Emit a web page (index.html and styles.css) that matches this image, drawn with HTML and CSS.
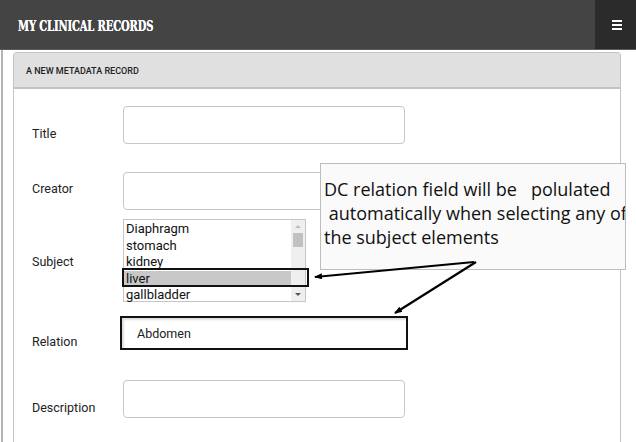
FILE: index.html
```html
<!DOCTYPE html>
<html>
<head>
<meta charset="utf-8">
<link rel="stylesheet" href="styles.css">
</head>
<body>
<header class="navbar">
  <div class="brand">MY CLINICAL RECORDS</div>
  <div class="toggle"><span></span><span></span><span></span></div>
</header>
<main class="page">
  <section class="panel">
    <div class="panel-heading">A NEW METADATA RECORD</div>
    <div class="panel-body">
      <div class="row row-title">
        <label class="lbl">Title</label>
        <div class="input"></div>
      </div>
      <div class="row row-creator">
        <label class="lbl">Creator</label>
        <div class="input"></div>
      </div>
      <div class="row row-subject">
        <label class="lbl">Subject</label>
        <div class="listbox">
          <div class="options">
            <div class="opt">Diaphragm</div>
            <div class="opt">stomach</div>
            <div class="opt">kidney</div>
            <div class="opt selected">liver</div>
            <div class="opt">gallbladder</div>
          </div>
          <div class="scrollbar">
            <div class="arrow up"></div>
            <div class="track"><div class="thumb"></div></div>
            <div class="arrow down"></div>
          </div>
          <div class="highlight"></div>
        </div>
      </div>
      <div class="row row-relation">
        <label class="lbl">Relation</label>
        <div class="input relation">Abdomen</div>
      </div>
      <div class="row row-desc">
        <label class="lbl">Description</label>
        <div class="input"></div>
      </div>
    </div>
  </section>
  <div class="callout">DC relation field will be &nbsp; polulated<br>&nbsp;automatically when selecting any of<br>the subject elements</div>
  <svg class="arrows" width="636" height="442" viewBox="0 0 636 442">
    <defs>
      <marker id="ah" markerWidth="8" markerHeight="6" refX="7" refY="3" orient="auto" markerUnits="userSpaceOnUse">
        <path d="M0,0 L8,3 L0,6 Z" fill="#000"/>
      </marker>
    </defs>
    <line x1="472" y1="262" x2="313" y2="277" stroke="#000" stroke-width="2.2" marker-end="url(#ah)"/>
    <line x1="474" y1="262" x2="393" y2="313" stroke="#000" stroke-width="2.2" marker-end="url(#ah)"/>
  </svg>
</main>
</body>
</html>
```
FILE: styles.css
```css
* { box-sizing: border-box; }
html, body { margin: 0; padding: 0; background: #fff; }
body { width: 636px; height: 442px; overflow: hidden; font-family: Roboto, "Liberation Sans", sans-serif; position: relative; }

.navbar {
  height: 50px;
  background: #444;
  border-bottom: 1px solid #5a5a5a;
  display: flex;
  justify-content: space-between;
  align-items: stretch;
  padding-left: 18px;
}
.brand {
  color: #fff;
  font-family: "DejaVu Serif Condensed", "DejaVu Serif", serif;
  font-weight: bold;
  font-size: 15px;
  letter-spacing: -0.2px;
  padding-top: 17px;
  transform: scaleX(0.74);
  transform-origin: 0 0;
  white-space: nowrap;
  text-shadow: 0 0 0.6px #fff;
}
.toggle {
  width: 41px;
  background: #2b2b2b;
  display: flex;
  flex-direction: column;
  align-items: center;
  justify-content: center;
  gap: 2px;
  padding-left: 2px;
}
.toggle span { display: block; width: 10px; height: 2px; background: #fff; }

.page {
  position: relative;
  height: 392px;
  border-left: 2px solid #b5b5b5;
  margin-left: 1px;
  padding: 2px 0 0 10px;
}
.panel {
  width: 608px;
  height: 400px;
  border: 1px solid #c4c4c4;
  border-radius: 3px 3px 0 0;
}
.panel-heading {
  height: 36px;
  background: #e0e0e0;
  border-bottom: 2px solid #c2c2c2;
  font-size: 9px;
  font-weight: 500;
  color: #222;
  padding: 13px 0 0 12px;
}
.panel-body { padding: 17px 0 0 18px; }

.row { display: flex; }
.lbl {
  width: 91px;
  font-size: 12.5px;
  line-height: 16px;
  color: #222;
}
.row-title { height: 38px; margin-bottom: 28px; }
.row-title .lbl { padding-top: 20px; }
.row-creator { height: 38px; margin-bottom: 9px; }
.row-creator .lbl { padding-top: 9px; }
.row-subject { height: 83px; margin-bottom: 14px; }
.row-subject .lbl { padding-top: 35px; }
.row-relation { height: 34px; margin-bottom: 30px; }
.row-relation .lbl { padding-top: 18px; }
.row-desc { height: 38px; }
.row-desc .lbl { padding-top: 20px; }

.input {
  width: 282px;
  height: 38px;
  border: 1px solid #c6c6c6;
  border-radius: 4px;
  background: #fff;
}
.relation {
  height: 34px;
  width: 288px;
  margin-left: -3px;
  border: 2px solid #111;
  border-radius: 0;
  box-shadow: inset 2px 2px 2px #ddd;
  font-size: 12.5px;
  padding: 8px 0 0 15px;
  color: #222;
}

.listbox {
  position: relative;
  width: 183px;
  height: 83px;
  border: 1px solid #c6c6c6;
  display: flex;
  background: #fff;
}
.options { flex: 1; padding-top: 1px; }
.opt {
  height: 16.5px;
  line-height: 16px;
  font-size: 13px;
  padding-left: 2px;
  color: #111;
}
.opt.selected { background: #c8c8c8; }
.scrollbar {
  width: 14px;
  background: #efefef;
  display: flex;
  flex-direction: column;
  align-items: center;
}
.arrow { width: 0; height: 0; margin: 5px 0; border-left: 3px solid transparent; border-right: 3px solid transparent; }
.arrow.up { border-bottom: 3px solid #bbb; }
.arrow.down { border-top: 3px solid #555; margin-top: auto; }
.track { flex: 1; width: 100%; }
.thumb { width: 10px; height: 14px; margin: 0 auto; background: #c1c1c1; }
.highlight {
  position: absolute;
  left: -2px;
  top: 48px;
  width: 187px;
  height: 19px;
  border: 2px solid #111;
}

.callout {
  position: absolute;
  left: 317px;
  top: 113px;
  width: 306px;
  height: 107px;
  background: #fafafa;
  border: 1px solid #bdbdbd;
  font-family: "Open Sans", "Noto Sans", sans-serif;
  font-size: 18px;
  line-height: 24px;
  color: #111;
  padding: 13px 0 0 3px;
  white-space: nowrap;
  overflow: hidden;
}
.arrows { position: absolute; left: -1px; top: -50px; pointer-events: none; }
```
